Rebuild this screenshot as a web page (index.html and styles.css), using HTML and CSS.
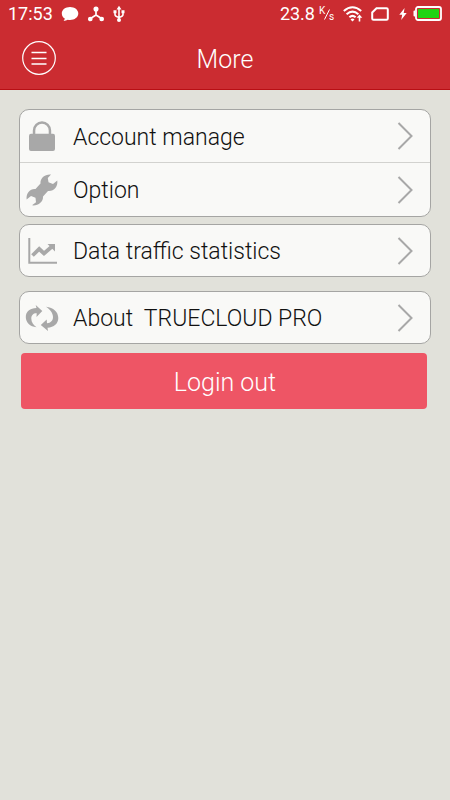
FILE: index.html
```html
<!DOCTYPE html>
<html lang="en">
  <head>
    <meta charset="UTF-8" />
    <meta name="viewport" content="width=device-width, initial-scale=1.0" />
    <title>More</title>
    <link rel="stylesheet" href="styles.css">
  </head>
  <body>
    <header>
      <div class="status-bar">
        <span class="time">17:53</span>
        <svg width="18" height="18" viewBox="0 0 18 18" fill="#fff">
          <path d="M9 2C4.400 2 .8 4.800 .8 8.400c0 2.200 1.200 4 3 5.200-.1 1-.6 1.700-1.200 2.400 1.700-.1 3.100-.6 4.200-1.300.7.100 1.400.2 2.200.2 4.600 0 8.300-2.900 8.300-6.500S13.600 2 9 2z" />
        </svg>
        <svg width="18" height="18" viewBox="0 0 18 18" fill="#fff" stroke="#fff" stroke-width="1.700">
          <path d="M9 4v6L3.500 13.500M9 10l5.500 3.500" fill="none" />
          <circle cx="9" cy="4" r="1.700" />
          <circle cx="3.300" cy="14" r="1.500" />
          <circle cx="14.700" cy="14" r="1.500" />
        </svg>
        <svg width="12" height="18" viewBox="1 0 12 18" fill="none" stroke="#fff" stroke-width="1.600">
          <path d="M7 3v12M3 7v2.500Q3 11.500 7 12.500M11 7v2.500Q11 11.500 7 12.500" />
          <path d="M7 .8L9.500 4.500h-5zM1.500 5.200h3V8.200h-3zM9.500 5.200h3V8.200h-3z" fill="#fff" stroke="none" />
          <circle cx="7" cy="15" r="2" fill="#fff" stroke="none" />
        </svg>
        <span class="speed">23.8</span>
        <svg class="unit" width="16" height="18" viewBox="0 0 16 18" fill="#fff" stroke="#fff">
          <path d="M5.500 14.500L10.500 4.500" fill="none" />
          <text x="0" y="9" stroke="none">K</text>
          <text x="10" y="15" stroke="none">s</text>
        </svg>
        <svg class="wifi" width="20" height="18" viewBox="0 0 20 18" fill="none" stroke="#fff" stroke-width="2">
          <path d="M.8 6Q9.500-1.500 18.200 6M3.600 9.200Q9.500 4 15.400 9.200M6.400 12.300Q9.500 9.500 12.600 12.300" />
          <path d="M9.500 16.500l-2-2.100q2-1.600 4 0zM16.500 9.500l2.800 3.300h-2v3.700h-1.600v-3.700h-2z" fill="#fff" stroke="none" />
        </svg>
        <svg width="18" height="14" viewBox="0 0 18 14" fill="none" stroke="#fff" stroke-width="2">
          <path d="M5.500 1.200H15.500q1.300 0 1.300 1.300v9q0 1.300-1.300 1.300H2.500q-1.300 0-1.300-1.300V5.500z" />
        </svg>
        <svg class="bolt" width="8" height="12" viewBox="0 0 8 12" fill="#fff">
          <path d="M5.600 0L.3 6.700h2.900L2.200 12l5.500-7H4.700z" />
        </svg>
        <svg class="battery" width="29" height="15" viewBox="0 0 29 15">
          <path d="M2.500 4.500h-1q-1 0-1 1v4q0 1 1 1h1z" fill="#fff" />
          <rect x="3" y="1" width="25" height="13" rx="2" fill="none" stroke="#fff" stroke-width="1.800" />
          <rect x="5" y="3" width="21" height="9" fill="#1fd413" />
        </svg>
      </div>
      <div class="title-bar">
        <button class="menu" type="button" aria-label="Menu">
          <svg width="34" height="34" viewBox="0 0 34 34" fill="none" stroke="#fff">
            <circle cx="17" cy="17" r="16.300" stroke-width="1.200" />
            <path d="M9.500 11.500h15M9.500 17.500h15M9.500 23h15" stroke-width="1.300" />
          </svg>
        </button>
        <h1>More</h1>
      </div>
    </header>

    <main>
      <nav class="group">
        <a class="row" href="#account">
          <svg class="icon" viewBox="0 0 34 34" fill="#a8a8a8">
            <path d="M4 17q0-2.200 2-2.200h1.800V11.500a9.200 9.200 0 0 1 18.400 0v3.300H28q2 0 2 2.200v13q0 2-2 2H6q-2 0-2-2zM10.300 14.800h13.400V11.500a6.700 6.700 0 0 0-13.400 0z" />
          </svg>
          <span>Account manage</span>
          <svg class="chevron" viewBox="0 0 16 28"><path d="M1.500 1L14.500 14 1.500 27" /></svg>
        </a>
        <a class="row" href="#option">
          <svg class="icon" viewBox="0 0 34 34" fill="#a8a8a8">
            <path d="M26 1.500C20 1 15 5 15.500 10.500L10.500 16C5 15.500 1 20 1.600 26.500L6 23l4.500 1.800.5 4.500-4 3C13 33 18.500 29 18 23.500L23 18C29 18.500 33 14 32.300 7.500L28 11l-4.500-1.700L22.800 5z" />
          </svg>
          <span>Option</span>
          <svg class="chevron" viewBox="0 0 16 28"><path d="M1.500 1L14.500 14 1.500 27" /></svg>
        </a>
      </nav>

      <nav class="group">
        <a class="row" href="#traffic">
          <svg class="icon" viewBox="0 0 34 34" fill="none" stroke="#a8a8a8">
            <path d="M4.300 4v24.700H32" stroke-width="2" />
            <path d="M7.500 21.500l6.700-6.500 4.800 4.500L27 12.500" stroke-width="3.800" />
            <path d="M22.500 10h7.500v7.500z" fill="#a8a8a8" stroke="none" />
          </svg>
          <span>Data traffic statistics</span>
          <svg class="chevron" viewBox="0 0 16 28"><path d="M1.500 1L14.500 14 1.500 27" /></svg>
        </a>
      </nav>

      <nav class="group about">
        <a class="row" href="#about">
          <svg class="icon" viewBox="0 0 34 34" fill="#a8a8a8">
            <path d="M11.500 26.300C5 25.500.8 21.500.8 16 .8 10.500 5 7 11.500 7L10.700 4 17.300 10l-5.800 6 .2-3.800C8.500 12 6.300 14 6.300 17.500c0 3.800 2.200 6.800 5.200 8.800z" />
            <path d="M21 5.700C28.500 6.500 33.300 11 33.300 17c0 5.500-4.300 9.500-10.800 9.700l.5 3.300L15.800 24l5.900-5.500.3 3.700c3.800-.2 6-2.700 6-6.200 0-4-2.800-7.500-7-10.300z" />
          </svg>
          <span>About&nbsp; TRUECLOUD PRO</span>
          <svg class="chevron" viewBox="0 0 16 28"><path d="M1.500 1L14.500 14 1.500 27" /></svg>
        </a>
      </nav>

      <button class="logout" type="button">Login out</button>
    </main>
  </body>
</html>
```
FILE: styles.css
```css
* {
  box-sizing: border-box;
}
body {
  margin: 0;
  min-height: 100vh;
  font-family: Roboto, "Liberation Sans", sans-serif;
  font-weight: 300;
  color: #111;
  background-color: #e1e1da;
}
svg {
  display: block;
  flex: none;
}
header {
  color: #fff;
  background-color: #cb2c31;
  border-bottom: 1px solid #b80f14;
}
.status-bar {
  display: flex;
  align-items: center;
  gap: 8px;
  height: 27px;
  padding: 0 8px;
  font-size: 18px;
  font-weight: 400;
}
.speed {
  margin-left: auto;
}
.unit {
  margin-left: -4px;
  font-size: 10px;
}
.bolt {
  margin: 0 -2px 0 2px;
}
.title-bar {
  display: grid;
  grid-template-columns: 34px 1fr 34px;
  align-items: center;
  height: 62px;
  padding: 0 22px;
}
.menu {
  padding: 0;
  border: 0;
  background: none;
}
h1 {
  margin: 0;
  padding-top: 2px;
  font-size: 25px;
  font-weight: 300;
  text-align: center;
}
main {
  padding: 19px 19px 24px;
}
.group {
  margin-bottom: 7px;
  border: 1px solid #a5a5a3;
  border-radius: 10px;
  background-color: #f9f9f7;
}
.about {
  margin: 14px 0 9px;
}
.row {
  display: flex;
  align-items: center;
  height: 51px;
  padding: 0 17px 0 5px;
  font-size: 23px;
  color: inherit;
  text-decoration: none;
}
.row:not(:last-child) {
  height: 52px;
}
.row + .row {
  height: 54px;
  border-top: 1px solid #d2d2cf;
}
.row span {
  flex: 1;
  margin-left: 14px;
  padding-top: 2px;
}
.icon {
  width: 34px;
  height: 34px;
}
.chevron {
  width: 16px;
  height: 28px;
  fill: none;
  stroke: #a8a8a8;
  stroke-width: 2;
}
.logout {
  display: block;
  width: calc(100% - 6px);
  height: 56px;
  margin: 0 2px;
  padding: 2px 0 0 2px;
  border: 0;
  border-radius: 4px;
  font: inherit;
  font-size: 25px;
  color: #fff;
  background-color: #ee5565;
}
```
